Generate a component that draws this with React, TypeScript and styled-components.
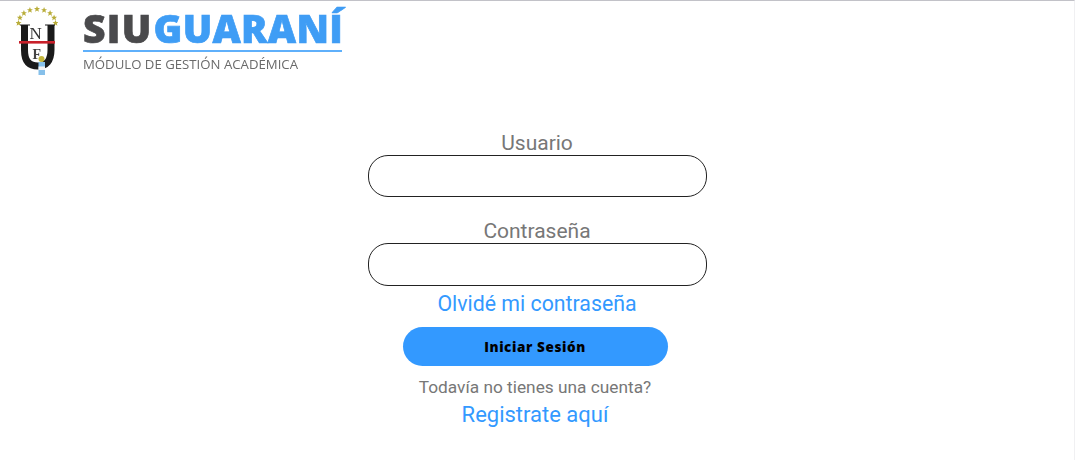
import React from "react";
import styled, { createGlobalStyle } from "styled-components";

const Global = createGlobalStyle`
  html, body { margin: 0; padding: 0; background: #fff; }
  * { box-sizing: border-box; }
`;

const Page = styled.div`
  width: 1075px;
  height: 470px;
  overflow: hidden;
  background: #fff;
  font-family: Roboto, "Liberation Sans", sans-serif;
`;

const Frame = styled.div`
  height: 460px;
  border-top: 1px solid #c2c2c8;
  border-right: 1px solid #f0f0f2;
`;

const Header = styled.header`
  display: flex;
  align-items: flex-start;
  height: 130px;
  padding: 5px 0 0 16px;
  gap: 25px;
`;

const Emblem = styled.svg`
  width: 42px;
  height: 72px;
  filter: blur(0.5px);
  flex: none;
`;

const Brand = styled.div`
  display: flex;
  flex-direction: column;
  width: 259px;
  filter: blur(0.35px);
`;

const BrandName = styled.div`
  padding-top: 1px;
  font-family: "Open Sans", sans-serif;
  font-weight: 800;
  font-size: 39px;
  line-height: 41px;
  letter-spacing: 0.3px;
  white-space: nowrap;
  -webkit-text-stroke: 0.7px currentColor;
  color: #3f9df5;
`;

const BrandDark = styled.span`
  color: #4a4a4c;
  letter-spacing: 1.3px;
  margin-right: 1px;
`;

const BrandRule = styled.div`
  height: 2px;
  margin-top: 2px;
  background: #5fb0fb;
`;

const BrandSub = styled.div`
  margin-top: 4px;
  font-family: "Open Sans", sans-serif;
  font-size: 13.2px;
  line-height: 16px;
  white-space: nowrap;
  color: #6a6a6a;
`;

const Form = styled.form`
  display: flex;
  flex-direction: column;
  align-items: center;
  width: 339px;
  margin: 0 auto;
`;

const Label = styled.label`
  font-size: 21px;
  line-height: 24px;
  color: #777;
`;

const Field = styled.input<{ $gap: number; $tall?: boolean }>`
  display: block;
  width: 339px;
  height: ${(p) => (p.$tall ? 43 : 42)}px;
  margin-bottom: ${(p) => p.$gap}px;
  border: 1px solid #222;
  border-radius: 20px;
  background: #fff;
  outline: none;
`;

const ForgotLink = styled.a`
  font-size: 21.3px;
  line-height: 28px;
  color: #3399ff;
  text-decoration: none;
`;

const Submit = styled.button`
  width: 265px;
  height: 39px;
  margin: 9px 4px 0 0;
  border: 0;
  border-radius: 20px;
  background: #3399ff;
  color: #000;
  font-family: "Open Sans", sans-serif;
  font-weight: 800;
  font-size: 13.5px;
  letter-spacing: 0.6px;
`;

const Hint = styled.p`
  margin: 10px 4px 0 0;
  font-size: 17.3px;
  line-height: 22px;
  color: #777;
`;

const RegisterLink = styled.a`
  margin: 3px 4px 0 0;
  font-size: 22px;
  line-height: 28px;
  color: #3399ff;
  text-decoration: none;
`;

const stars = Array.from({ length: 9 }, (_, i) => {
  const a = Math.PI * (1 - i / 8);
  return { x: 21 + 18.5 * Math.cos(a), y: 17 - 14 * Math.sin(a) };
});

const starPath = "M0 -3 L0.9 -0.9 L3 -0.9 L1.3 0.5 L1.9 2.8 L0 1.4 L-1.9 2.8 L-1.3 0.5 L-3 -0.9 L-0.9 -0.9 Z";

export default function App() {
  return (
    <Page>
      <Global />
      <Frame>
        <Header>
          <Emblem viewBox="0 0 42 72" aria-hidden="true">
            {stars.map((s, i) => (
              <path key={i} d={starPath} transform={`translate(${s.x} ${s.y})`} fill="#b9ad3a" />
            ))}
            <path d="M8.5 19 V44 C8.5 55 13 60 22 60 C30 60 35 55 35 44 V19" fill="none" stroke="#1a1a1a" strokeWidth="7" />
            <path d="M4 19 H14 M29 19 H39" stroke="#1a1a1a" strokeWidth="1" />
            <text x="13.5" y="33" fontFamily="Liberation Serif, serif" fontSize="17" fill="#333">N</text>
            <text x="16.5" y="53" fontFamily="Liberation Serif, serif" fontSize="14" fontWeight="700" fill="#444">F</text>
            <rect x="3" y="35" width="36" height="2.6" fill="#c8202a" />
            <circle cx="25.5" cy="53" r="3" fill="#c4b63c" />
            <path d="M22.5 56 H29 V69 H22.5 Z" fill="#86c0ea" />
            <path d="M22.5 60.5 H29 V64 H22.5 Z" fill="#f4f4f4" />
          </Emblem>
          <Brand>
            <BrandName>
              <BrandDark>SIU</BrandDark>GUARANÍ
            </BrandName>
            <BrandRule />
            <BrandSub>MÓDULO DE GESTIÓN ACADÉMICA</BrandSub>
          </Brand>
        </Header>
        <Form>
          <Label>Usuario</Label>
          <Field $gap={22} />
          <Label>Contraseña</Label>
          <Field $gap={4} $tall />
          <ForgotLink href="#">Olvidé mi contraseña</ForgotLink>
          <Submit type="button">Iniciar Sesión</Submit>
          <Hint>Todavía no tienes una cuenta?</Hint>
          <RegisterLink href="#">Registrate aquí</RegisterLink>
        </Form>
      </Frame>
    </Page>
  );
}
